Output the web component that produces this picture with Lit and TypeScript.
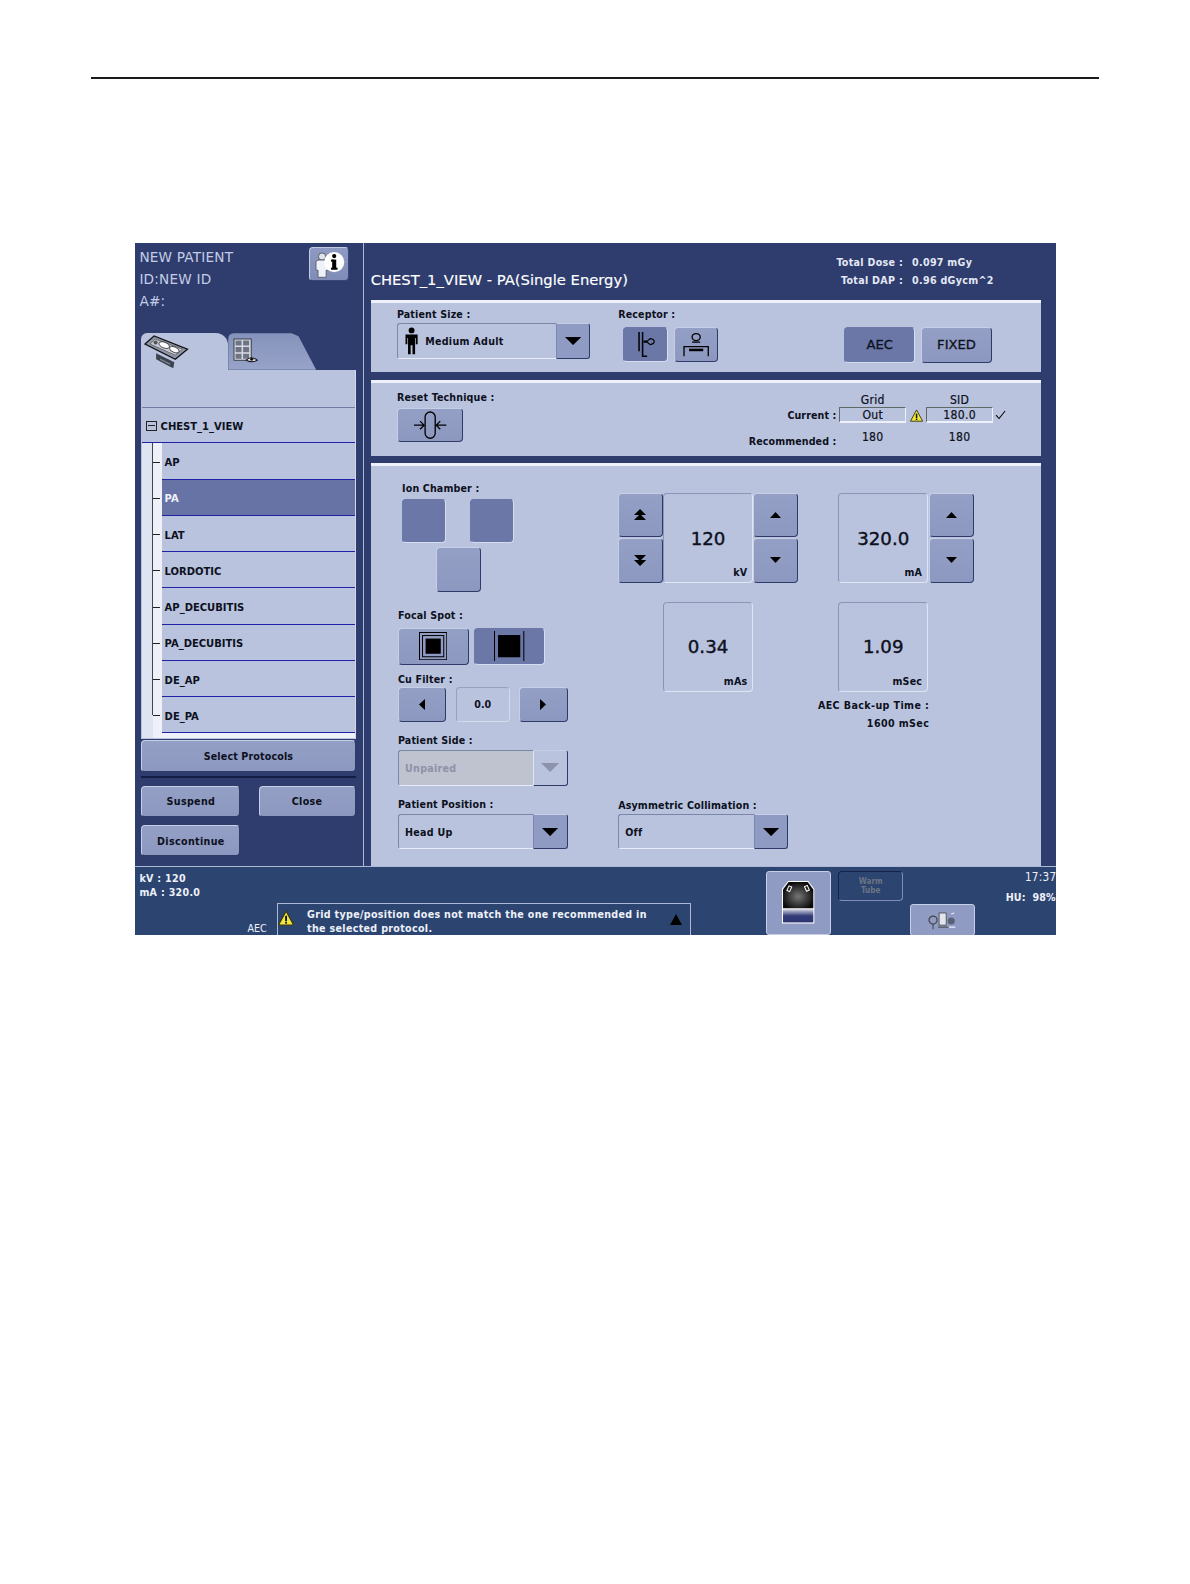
import { LitElement, html, css } from "lit";
import { customElement } from "lit/decorators.js";

const tri = (dir: string, w = 12, h = 8, c = "#000") => {
  const pts: Record<string, string> = {
    up: `0,${h} ${w},${h} ${w / 2},0`,
    down: `0,0 ${w},0 ${w / 2},${h}`,
    left: `${w},0 ${w},${h} 0,${h / 2}`,
    right: `0,0 0,${h} ${w},${h / 2}`,
  };
  return html`<svg width=${w} height=${h} viewBox="0 0 ${w} ${h}"><polygon points=${pts[dir]} fill=${c}></polygon></svg>`;
};

const warn = (s = 14) => html`<svg width=${s} height=${s} viewBox="0 0 14 14"><polygon points="7,1 13.5,13 0.5,13" fill="#f2e53c" stroke="#3a3a10" stroke-width="1"></polygon><rect x="6.2" y="5" width="1.6" height="4.6" fill="#111"></rect><rect x="6.2" y="10.2" width="1.6" height="1.6" fill="#111"></rect></svg>`;

const PROTOCOLS = ["AP", "PA", "LAT", "LORDOTIC", "AP_DECUBITIS", "PA_DECUBITIS", "DE_AP", "DE_PA"];

@customElement("app-root")
export class AppRoot extends LitElement {
  static styles = css`
    :host { display: block; width: 1190px; height: 1584px; background: #fff; font-family: "DejaVu Sans", sans-serif; color: #0d1020; overflow: hidden; }
    * { box-sizing: border-box; }
    .page { padding-top: 76px; zoom: 1.0101; }
    .rule { margin-left: 90px; width: 998px; height: 2px; background: #1a1a1a; }
    .screen { margin: 163px 0 0 134px; width: 911px; height: 685px; background: #2e3d6d; display: flex; flex-direction: column; overflow: hidden; }
    .upper { height: 616px; display: flex; flex: none; }
    .left { width: 226px; flex: none; padding: 0 0 0 6px; display: flex; flex-direction: column; border-right: 1px solid #aeb8d6; }
    .right { flex: 1; padding-left: 7px; display: flex; flex-direction: column; min-width: 0; }

    .cond { font-family: "DejaVu Sans Condensed", "DejaVu Sans", sans-serif; font-stretch: condensed; }

    .phead { height: 89px; flex: none; position: relative; margin-left: -2px; padding-top: 4px; color: #c5cde6; font-size: 13.5px; line-height: 21px; font-weight: 400; letter-spacing: .2px; }
    .line { height: 21.5px; }
    .info { position: absolute; left: 168px; top: 4px; width: 40px; height: 33px; background: linear-gradient(#8e9ac2, #7f8cb8); border-radius: 4px; border: 1px solid #c3cbe4; border-bottom-color: #3a4674; border-right-color: #3a4674; display: flex; align-items: center; justify-content: center; }

    .tabs { height: 36px; flex: none; display: flex; align-items: flex-end; position: relative; width: 212px; }
    .tab1 { width: 86px; height: 36px; background: #b9c3de; border-radius: 6px 12px 0 0; display: flex; padding: 2px 0 0 3px; }
    .tab2 { width: 87px; height: 36px; background: linear-gradient(#8592bb, #97a3c8); clip-path: polygon(0 0, 72% 0, 80% 8%, 100% 100%, 0 100%); border-radius: 6px 0 0 0; padding: 5px 0 0 5px; }
    .tree { width: 212px; height: 366px; background: #b9c3de; flex: none; padding: 37px 0 0 0; border-right: 1px solid #d4daec; }
    .root { height: 36px; margin-left: 1px; border-top: 1px solid #6f7aa5; border-bottom: 1px solid #2121a8; display: flex; align-items: center; padding-left: 4px; gap: 4px; font-size: 11px; font-weight: 700; padding-top: 2px; }
    .minus { width: 10px; height: 10px; border: 1px solid #222; position: relative; flex: none; }
    .minus::after { content: ""; position: absolute; left: 1px; right: 1px; top: 3px; height: 1px; background: #222; }
    .list { display: flex; background: #eef1f9; margin-left: 1px; height: 292px; }
    .wires { width: 19px; flex: none; position: relative; background: linear-gradient(90deg, #dfe4f2 0 11px, #eef1f9 11px); }
    .wires::before { content: ""; position: absolute; left: 10px; top: 0; height: 269px; width: 1px; background: #444; }
    .row { height: 35.9px; background: #b9c3de; border-bottom: 1px solid #2121a8; display: flex; align-items: center; padding: 3px 0 0 3px; font-size: 11px; font-weight: 700; position: relative; }
    .row::before { content: ""; position: absolute; left: -9px; top: 18px; width: 7px; height: 1px; background: #222; }
    .row.sel { background: #6773a5; color: #eef1f9; }
    .rows { flex: 1; }

    .btn { background: linear-gradient(#939fc5, #8c98bf); border: 1px solid #c7cfe6; border-right-color: #2f3a68; border-bottom-color: #2f3a68; border-radius: 4px; display: flex; align-items: center; justify-content: center; font-weight: 700; font-size: 10.5px; color: #0d1020; flex: none; letter-spacing: .15px; }
    .btn.on { background: #6a77a7; border-color: #6a77a7; border-right-color: #d6dcf0; border-bottom-color: #d6dcf0; }
    .sp { width: 212px; height: 31px; margin-top: 1px; }
    .hr { width: 212px; height: 2px; background: #141d44; margin: 4px 0 8px; flex: none; }
    .actions { width: 212px; display: grid; grid-template-columns: 98px 96px; justify-content: space-between; row-gap: 8.5px; }
    .actions .btn { height: 30.5px; letter-spacing: .35px; }

    .title { height: 56px; flex: none; display: flex; justify-content: space-between; color: #fff; }
    .title h1 { margin: 26px 0 0 0; font-size: 14.6px; line-height: 20px; font-weight: 400; -webkit-text-stroke: .15px #fff; }
    .dose { width: 218px; padding-top: 9px; display: grid; grid-template-columns: 67px auto; align-content: start; column-gap: 9px; font-size: 10.5px; font-weight: 700; line-height: 18px; color: #e4e8f5; letter-spacing: .3px; }
    .dose span { white-space: nowrap; }
    .dose span:nth-child(odd) { text-align: right; }

    .panel { width: 664px; background: #b9c3de; border-top: 3px solid #eef1f9; flex: none; position: relative; }
    .label { font-size: 10.5px; font-weight: 700; line-height: 12px; letter-spacing: .15px; white-space: nowrap; }
    .p1 { height: 71px; margin-bottom: 8px; padding: 5px 0 0 26px; display: flex; }
    .p2 { height: 75px; margin-bottom: 7px; padding: 8px 0 0 26px; display: flex; justify-content: space-between; }
    .p3 { height: 399px; padding: 14px 0 0 27px; display: flex; }

    .select { display: flex; align-items: stretch; height: 35px; border: 1px solid #7c86a6; border-right-color: #dfe4f2; border-bottom-color: #e8ecf7; border-radius: 3px; margin-top: 3px; font-size: 10.5px; font-weight: 700; letter-spacing: .3px; }
    .select .txt { flex: 1; display: flex; align-items: center; padding-left: 6px; gap: 6px; }
    .select .arr { width: 34px; background: #8f9bc2; display: flex; align-items: center; justify-content: center; border-left: 1px solid #7c88ae; border-right: 1px solid #2f3a68; border-bottom: 1px solid #2f3a68; border-top: 1px solid #c7cfe6; border-radius: 0 3px 3px 0; flex: none; margin: -1px -1px -1px 0; }
    .select.off { background: #bfc2cf; color: #8d93a8; }
    .select.off .arr { background: #b9c3de; border-left-color: #dfe4f2; }
    .c1 { width: 191px; flex: none; }
    .c2 { width: 224px; flex: none; margin-left: 28px; }
    .c3 { flex: none; padding-top: 19px; display: flex; gap: 6px; }
    .rec { display: flex; gap: 6px; margin-top: 7px; margin-left: 5px; }
    .rec .btn { width: 44px; height: 34px; }
    .c3 .btn { width: 70px; height: 35px; font-family: "DejaVu Sans", sans-serif; font-stretch: normal; font-size: 13px; font-weight: 400; -webkit-text-stroke: .3px #0d1020; letter-spacing: 0; }
    .rbtn { width: 65px; height: 34px; margin-top: 5px; }

    .gs { display: grid; grid-template-columns: auto 66px 20px 66px 14px; width: 268px; margin-right: 34px; padding-top: 3px; align-items: center; font-size: 12px; letter-spacing: .3px; text-align: center; grid-template-rows: 13px 16px 25px; -webkit-text-stroke: .2px #0d1020; }
    .gs .k { font-size: 10.5px; font-weight: 700; letter-spacing: .1px; text-align: right; padding-right: 3px; white-space: nowrap; -webkit-text-stroke: 0; }
    .gs .b { height: 16px; border: 1px solid #5e6a68; border-right-color: #eef1f9; border-bottom: 2px solid #eef1f9; display: flex; align-items: center; justify-content: center; }
    .gs .ic { display: flex; justify-content: center; }
    .gs .rv { padding-top: 2px; }
    .gs .rk { padding-top: 10px; }

    .L { width: 218px; flex: none; display: flex; flex-direction: column; padding-top: 2px; }
    .ion { margin-left: 4px; }
    .ionb { display: grid; grid-template-columns: 44px 44px 44px; margin: 5px 0 0 4px; row-gap: 4px; }
    .ionb .btn { width: 44px; height: 44px; }
    .ion1 { grid-column: 1; }
    .ion2 { grid-column: 2; margin-left: 23px; }
    .ion3 { grid-column: 1; margin-left: 34px; }
    .ml1 { margin-top: 17px; }
    .focus { display: flex; gap: 5px; margin-top: 7px; }
    .focus .btn { width: 70px; height: 36px; }
    .focus .btn.on { width: 71px; }
    .ml2 { margin-top: 8px; }
    .cu { display: flex; margin-top: 2px; width: 168px; justify-content: space-between; }
    .cu .btn { width: 48px; height: 35px; }
    .cu .val { width: 54px; height: 35px; border: 1px solid #d4daec; border-top-color: #98a2c0; border-left-color: #98a2c0; border-radius: 4px; display: flex; align-items: center; justify-content: center; font-size: 10.5px; font-weight: 700; }
    .ml3 { margin-top: 12px; }
    .ml4 { margin-top: 12px; }
    .w168 { width: 168px; }
    .select.tight { margin-top: 4px; }

    .display { width: 90px; height: 89px; border: 1px solid #e0e5f3; border-top-color: #8a95b8; border-left-color: #8a95b8; border-radius: 4px; position: relative; display: flex; align-items: center; justify-content: center; font-family: "DejaVu Sans", sans-serif; font-stretch: normal; font-size: 18px; font-weight: 500; flex: none; -webkit-text-stroke: .4px #0d1020; }
    .stepper .display { padding-top: 2px; }
    .display small { position: absolute; right: 5px; bottom: 4px; font-family: "DejaVu Sans Condensed", "DejaVu Sans", sans-serif; font-stretch: condensed; font-size: 10.5px; font-weight: 700; letter-spacing: .2px; -webkit-text-stroke: 0; }
    .stepper { display: flex; align-items: stretch; height: 89px; }
    .col { display: flex; flex-direction: column; gap: 1px; flex: none; }
    .col.gap { margin-left: 1px; }
    .col .btn { width: 44px; height: 44px; }
    .M { width: 218px; flex: none; padding-top: 13px; display: flex; flex-direction: column; }
    .M .display.lo { margin: 19px 0 0 44px; }
    .ml5 { margin-top: 106px; }
    .R { width: 140px; flex: none; padding-top: 13px; }
    .R .display { width: 89px; }
    .R .display.lo { margin-top: 19px; }
    .aec { width: 90px; margin-top: 4px; font-size: 10.5px; font-weight: 700; letter-spacing: .4px; line-height: 18px; display: flex; flex-direction: column; align-items: flex-end; white-space: nowrap; }

    .status { flex: 1; background: #2c4570; border-top: 1px solid #aeb8d6; display: flex; position: relative; color: #eef1f9; min-height: 0; overflow: hidden; }
    .kv { width: 111px; flex: none; padding: 4px 0 0 4px; font-size: 10.5px; font-weight: 700; line-height: 14px; letter-spacing: .3px; }
    .aectxt { width: 29px; padding-top: 55px; font-size: 10.5px; flex: none; }
    .msg { width: 410px; height: 40px; margin-top: 36px; border: 1px solid #aeb8d6; display: flex; flex: none; font-size: 10.5px; font-weight: 700; line-height: 14px; letter-spacing: .33px; padding: 3px 0 0 0; white-space: nowrap; }
    .msg .m { margin: 0 0 0 13px; flex: 1; }
    .msg .w { padding-top: 3px; }
    .msg .up { padding: 7px 8px 0 0; }
    .thumb { width: 65px; height: 64px; margin: 4px 0 0 74px; background: #8f9bc2; border: 1px solid #c7cfe6; border-radius: 3px; flex: none; display: flex; justify-content: center; padding-top: 8px; }
    .warmb { width: 64px; height: 30px; margin: 4px 0 0 7px; background: #2c4570; border: 1px solid #14224c; border-right-color: #7f8db8; border-bottom-color: #7f8db8; border-radius: 4px; font-size: 8px; line-height: 9px; text-align: center; color: #6b7484; padding-top: 5px; flex: none; font-weight: 700; }
    .tool { width: 64px; height: 32px; margin: 37px 0 0 7px; background: #8f9bc2; border: 1px solid #c7cfe6; border-radius: 3px; display: flex; justify-content: center; align-items: center; flex: none; padding-top: 2px; }
    .clock { position: absolute; right: -1px; top: 3px; text-align: right; font-size: 11.5px; font-weight: 400; letter-spacing: .3px; line-height: 14px; }
    .hu { position: absolute; right: 0; top: 23px; font-size: 10.5px; font-weight: 700; letter-spacing: .1px; line-height: 14px; white-space: nowrap; }
  `;

  personIcon() {
    return html`<svg width="15" height="28" viewBox="0 0 15 28"><circle cx="7.5" cy="3.4" r="2.9" fill="#000"></circle><path d="M1.5 7.5h12v9.5h-1.800v-6h-.7V27H8.400V18H6.600V27H4V11h-.7v6H1.500z" fill="#000"></path></svg>`;
  }

  render() {
    return html`<div class="page">
      <div class="rule"></div>
      <div class="screen">
        <div class="upper">
          <div class="left">
            <div class="phead">
              <div class="line">NEW PATIENT</div><div class="line">ID:NEW ID</div><div class="line">A#:</div>
              <div class="info">
                <svg width="32" height="28" viewBox="0 0 32 28">
                  <circle cx="9" cy="6.500" r="3.600" fill="#dfe3ee" stroke="#333" stroke-width=".7"></circle>
                  <path d="M3 12q0-2 3-2h6q3 0 3 2v8h-2v7H5v-7H3z" fill="#eef1f9" stroke="#444" stroke-width=".7"></path>
                  <circle cx="21" cy="12" r="10" fill="#fff"></circle>
                  <rect x="19" y="9.500" width="4" height="9.500" fill="#000"></rect>
                  <rect x="17.800" y="9.500" width="3" height="2" fill="#000"></rect>
                  <rect x="17.800" y="17.500" width="6.500" height="2" fill="#000"></rect>
                  <circle cx="21" cy="6" r="2.100" fill="#000"></circle>
                </svg>
              </div>
            </div>
            <div class="tabs">
              <div class="tab1">
                <svg width="44" height="34" viewBox="0 0 44 34">
                  <path d="M12 18 30 27 29 33 25 31 12 24z" fill="#3c424e"></path>
                  <path d="M16 24l10 5" stroke="#8a90a0" stroke-width="1"></path>
                  <path d="M1 9 10 1 43 14 31 24z" fill="#8f96a8" stroke="#111" stroke-width="1.300"></path>
                  <path d="M6 9 11 4 38 14 31 20z" fill="#c6cad6" stroke="#444" stroke-width=".6"></path>
                  <circle cx="11.500" cy="7.500" r="2" fill="#555"></circle>
                  <ellipse cx="20" cy="10" rx="5.500" ry="2.800" fill="#fff" stroke="#222" stroke-width=".7" transform="rotate(22 20 10)"></ellipse>
                  <ellipse cx="30" cy="14.500" rx="5" ry="2.600" fill="#fff" stroke="#222" stroke-width=".7" transform="rotate(22 30 14.500)"></ellipse>
                </svg>
              </div>
              <div class="tab2">
                <svg width="26" height="26" viewBox="0 0 26 26">
                  <rect x="1" y="1" width="17" height="21" fill="#d7dbe6" stroke="#222" stroke-width=".8"></rect>
                  <path d="M2.500 2.500h6v5h-6zM10 2.500h6v5h-6zM2.500 9h6v5h-6zM10 9h6v5h-6zM2.500 15.500h6v5h-6zM10 15.500h6v5h-6z" fill="#6f7484"></path>
                  <path d="M13 22q5-5 11 0q-5 3-11 0z" fill="#eef1f9" stroke="#111" stroke-width="1"></path>
                  <circle cx="18.500" cy="21" r="1.500" fill="#111"></circle>
                </svg>
              </div>
            </div>
            <div class="tree cond">
              <div class="root"><span class="minus"></span>CHEST_1_VIEW</div>
              <div class="list">
                <div class="wires"></div>
                <div class="rows">
                  ${PROTOCOLS.map((p) => html`<div class="row ${p === "PA" ? "sel" : ""}">${p}</div>`)}
                </div>
              </div>
            </div>
            <div class="btn sp cond">Select Protocols</div>
            <div class="hr"></div>
            <div class="actions cond">
              <div class="btn">Suspend</div><div class="btn">Close</div>
              <div class="btn">Discontinue</div>
            </div>
          </div>
          <div class="right">
            <div class="title">
              <h1>CHEST_1_VIEW - PA(Single Energy)</h1>
              <div class="dose cond">
                <span>Total Dose :</span><span>0.097 mGy</span>
                <span>Total DAP :</span><span>0.96 dGycm^2</span>
              </div>
            </div>
            <div class="panel p1 cond">
              <div class="c1">
                <div class="label">Patient Size :</div>
                <div class="select">
                  <div class="txt">${this.personIcon()}Medium Adult</div>
                  <div class="arr">${tri("down", 16, 8)}</div>
                </div>
              </div>
              <div class="c2">
                <div class="label">Receptor :</div>
                <div class="rec">
                  <div class="btn on">
                    <svg width="22" height="30" viewBox="0 0 22 30" fill="none" stroke="#000" stroke-width="1.500"><path d="M5 3V22M8.500 3V27H13"></path><path stroke-width="1.200" d="M10 12h3l3-2.500q4 .5 4 3t-4 3l-3-2.500h-3z"></path></svg>
                  </div>
                  <div class="btn">
                    <svg width="30" height="30" viewBox="0 0 30 30" fill="none" stroke="#000" stroke-width="1.300"><ellipse cx="15" cy="8" rx="4" ry="3.500"></ellipse><path d="M11 13h8"></path><path d="M3 27V17.500H27V27"></path><rect x="8" y="19.500" width="14" height="2.500" fill="#000" stroke="none"></rect></svg>
                  </div>
                </div>
              </div>
              <div class="c3">
                <div class="btn on">AEC</div><div class="btn">FIXED</div>
              </div>
            </div>
            <div class="panel p2 cond">
              <div>
                <div class="label">Reset Technique :</div>
                <div class="btn rbtn">
                  <svg width="34" height="30" viewBox="0 0 34 30" fill="none" stroke="#000" stroke-width="1.300"><rect x="12" y="2" width="10" height="26" rx="5"></rect><path d="M1 15h10M7 11l4 4-4 4M33 15H23M27 11l-4 4 4 4"></path></svg>
                </div>
              </div>
              <div class="gs">
                <span></span><span>Grid</span><span></span><span>SID</span><span></span>
                <span class="k">Current :</span><span class="b">Out</span><span class="ic">${warn(13)}</span><span class="b">180.0</span>
                <span class="ic"><svg width="12" height="10" viewBox="0 0 12 10" fill="none" stroke="#000" stroke-width="1"><path d="M2 5l3 3.500L11 1"></path></svg></span>
                <span class="k rk">Recommended :</span><span class="rv">180</span><span></span><span class="rv">180</span><span></span>
              </div>
            </div>
            <div class="panel p3 cond">
              <div class="L">
                <div class="label ion">Ion Chamber :</div>
                <div class="ionb">
                  <div class="btn on ion1"></div><div class="btn on ion2"></div>
                  <div class="btn ion3"></div>
                </div>
                <div class="label ml1">Focal Spot :</div>
                <div class="focus">
                  <div class="btn">
                    <svg width="28" height="28" viewBox="0 0 28 28" fill="none" stroke="#000" stroke-width="1"><rect x=".5" y=".5" width="27" height="27"></rect><rect x="3.500" y="3.500" width="21" height="21"></rect><rect x="7" y="7" width="14" height="14" fill="#000"></rect></svg>
                  </div>
                  <div class="btn on">
                    <svg width="30" height="30" viewBox="0 0 30 30"><path d="M.5 0V30M29.500 0V30" stroke="#000" fill="none"></path><rect x="4" y="4" width="22" height="22" fill="#000"></rect></svg>
                  </div>
                </div>
                <div class="label ml2">Cu Filter :</div>
                <div class="cu">
                  <div class="btn">${tri("left", 6, 11)}</div>
                  <div class="val">0.0</div>
                  <div class="btn">${tri("right", 6, 11)}</div>
                </div>
                <div class="label ml3">Patient Side :</div>
                <div class="select off w168 tight">
                  <div class="txt">Unpaired</div>
                  <div class="arr">${tri("down", 18, 9, "#8c93aa")}</div>
                </div>
                <div class="label ml4">Patient Position :</div>
                <div class="select w168 tight">
                  <div class="txt">Head Up</div>
                  <div class="arr">${tri("down", 16, 8)}</div>
                </div>
              </div>
              <div class="M">
                <div class="stepper">
                  <div class="col">
                    <div class="btn"><svg width="12" height="12" viewBox="0 0 12 12"><path d="M6 0l6 6H0zM6 5l6 6H0z" fill="#000"></path></svg></div>
                    <div class="btn"><svg width="12" height="12" viewBox="0 0 12 12"><path d="M0 1h12L6 7zM0 6h12l-6 6z" fill="#000"></path></svg></div>
                  </div>
                  <div class="display">120<small>kV</small></div>
                  <div class="col">
                    <div class="btn">${tri("up", 11, 6)}</div>
                    <div class="btn">${tri("down", 11, 6)}</div>
                  </div>
                </div>
                <div class="display lo">0.34<small>mAs</small></div>
                <div class="label ml5">Asymmetric Collimation :</div>
                <div class="select w168">
                  <div class="txt">Off</div>
                  <div class="arr">${tri("down", 16, 8)}</div>
                </div>
              </div>
              <div class="R">
                <div class="stepper">
                  <div class="display">320.0<small>mA</small></div>
                  <div class="col gap">
                    <div class="btn">${tri("up", 11, 6)}</div>
                    <div class="btn">${tri("down", 11, 6)}</div>
                  </div>
                </div>
                <div class="display lo">1.09<small>mSec</small></div>
                <div class="aec"><span>AEC Back-up Time :</span><span>1600 mSec</span></div>
              </div>
            </div>
          </div>
        </div>
        <div class="status cond">
          <div class="kv">kV : 120<br />mA : 320.0</div>
          <div class="aectxt">AEC</div>
          <div class="msg">
            <div class="w">${warn(16)}</div>
            <div class="m">Grid type/position does not match the one recommended in<br />the selected protocol.</div>
            <div class="up">${tri("up", 12, 11)}</div>
          </div>
          <div class="thumb">
            <svg width="34" height="44" viewBox="0 0 34 44">
              <defs>
                <radialGradient id="g" cx=".5" cy=".55" r=".55"><stop offset="0" stop-color="#777"></stop><stop offset="1" stop-color="#0a0a0a"></stop></radialGradient>
                <linearGradient id="b" x1="0" y1="0" x2="0" y2="1"><stop offset="0" stop-color="#cfd3e0"></stop><stop offset=".5" stop-color="#333c78"></stop><stop offset="1" stop-color="#2e3672"></stop></linearGradient>
              </defs>
              <path d="M1 9 7 1H27L33 9V43H1z" fill="#fff"></path>
              <path d="M2 9.500 7.500 2H26.500L32 9.500V28H2z" fill="url(#g)"></path>
              <rect x="2" y="29" width="30" height="13" fill="url(#b)"></rect>
              <g fill="none" stroke="#fff" stroke-width="1"><rect x="7" y="6" width="3" height="5" transform="rotate(25 8 8)"></rect><rect x="24" y="6" width="3" height="5" transform="rotate(-25 25 8)"></rect></g>
            </svg>
          </div>
          <div class="warmb">Warm<br />Tube</div>
          <div class="tool">
            <svg width="28" height="18" viewBox="0 0 28 18">
              <circle cx="5" cy="8" r="4" fill="none" stroke="#444" stroke-width="1.200"></circle><path d="M5 12v5" stroke="#444"></path>
              <rect x="11" y="1" width="7" height="12" fill="#e2e5ee" stroke="#444" stroke-width=".8"></rect><path d="M10 15h10" stroke="#444"></path>
              <circle cx="23" cy="9" r="3.500" fill="#5a6075"></circle><path d="M23 2l3-1M21 15h6" stroke="#eef" stroke-width="1.200"></path>
            </svg>
          </div>
          <div class="clock">17:37</div>
          <div class="hu">HU:&nbsp; 98%</div>
        </div>
      </div>
    </div>`;
  }
}
